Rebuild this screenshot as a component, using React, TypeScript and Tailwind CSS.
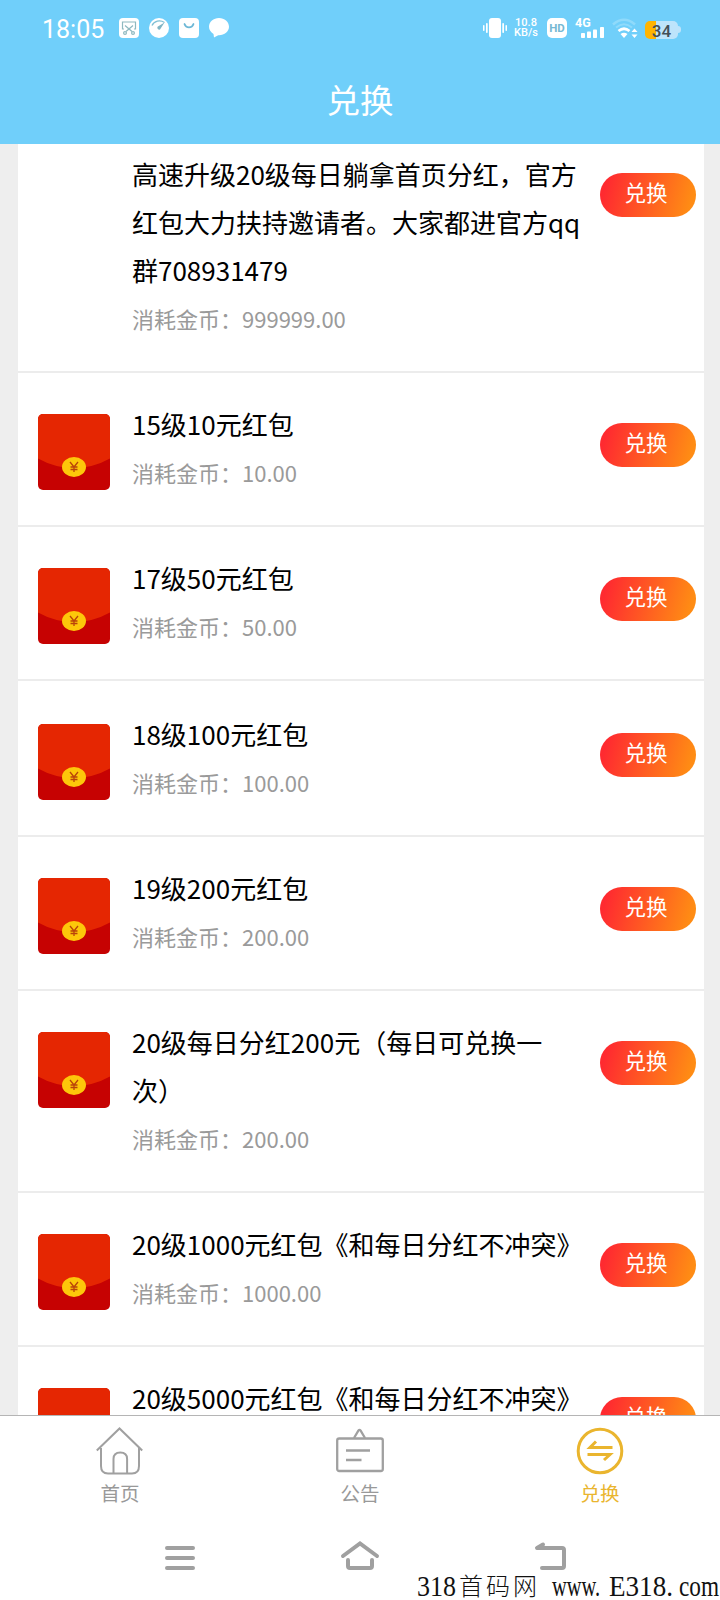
const items: { title: string; cost: string; img: boolean; row?: string }[] = [
  {
    title: "高速升级20级每日躺拿首页分红，官方\n红包大力扶持邀请者。大家都进官方qq\n群708931479",
    cost: "999999.00",
    img: false,
  },
  { title: "15级10元红包", cost: "10.00", img: true },
  { title: "17级50元红包", cost: "50.00", img: true },
  { title: "18级100元红包", cost: "100.00", img: true, row: "pt-[30px]" },
  { title: "19级200元红包", cost: "200.00", img: true },
  { title: "20级每日分红200元（每日可兑换一\n次）", cost: "200.00", img: true },
  { title: "20级1000元红包《和每日分红不冲突》", cost: "1000.00", img: true },
  { title: "20级5000元红包《和每日分红不冲突》", cost: "5000.00", img: true },
];

const StatusBar = () => {
  return (
    <div className="flex h-14 items-center justify-between pl-[42px] pr-[39px]">
      <div className="flex items-center gap-[10px]">
        <span className="mr-[4px] w-[63px] whitespace-nowrap pt-[3px] font-[Roboto,sans-serif] text-[25px] leading-[30px]">
          18:05
        </span>
        <svg width="20" height="20" viewBox="0 0 20 20" fill="none">
          <rect width="20" height="20" rx="4" fill="#fff" />
          <g stroke="#8fb9c0" strokeWidth="1.2">
            <path d="M5 11H3.5V4h13v7H15M6 7.5l7 6M14 7.5l-7 6" />
            <circle cx="6" cy="15" r="1.4" />
            <circle cx="14" cy="15" r="1.4" />
          </g>
        </svg>
        <svg width="20" height="20" viewBox="0 0 20 20" fill="none">
          <circle cx="10" cy="10" r="10" fill="#fff" />
          <path d="M3 7.5C5 3 11 1.5 15.500 4.500" stroke="#7fbfd4" strokeWidth="1.3" />
          <path d="M15.500 4.500L11 11.500A2 2 0 0 1 8.500 8.800z" fill="#7fb4c4" />
        </svg>
        <svg width="20" height="20" viewBox="0 0 20 20" fill="none">
          <rect width="20" height="20" rx="4" fill="#fff" />
          <path d="M5.500 6C7 10.500 13 10.500 14.500 6" stroke="#6db8d6" strokeWidth="1.800" strokeLinecap="round" />
        </svg>
        <svg width="20" height="20" viewBox="0 0 20 20">
          <path
            d="M10 0C4.500 0 0 3.800 0 8.700c0 3 1.800 5.600 4.500 7.200L5 19.500l4.200-2.300H10c5.500 0 10-3.700 10-8.500S15.500 0 10 0z"
            fill="#fff"
          />
        </svg>
      </div>
      <div className="flex items-center">
        <svg width="24" height="20" viewBox="0 0 24 20" fill="#fff">
          <rect x="6" width="12" height="20" rx="3" />
          <rect x="3" y="5" width="1.700" height="10" rx=".8" />
          <rect x="0" y="7" width="1.500" height="6" rx=".7" />
          <rect x="19.300" y="5" width="1.700" height="10" rx=".8" />
          <rect x="22.500" y="7" width="1.500" height="6" rx=".7" />
        </svg>
        <div className="ml-[7px] w-6 whitespace-nowrap text-center font-[Roboto,sans-serif] text-[11px] font-medium leading-[10.5px]">
          10.8
          <br />
          KB/s
        </div>
        <div className="ml-[9px] h-5 w-5 rounded-[5px] bg-white text-center font-[Roboto,sans-serif] text-[11.5px] font-bold leading-5 text-[#76b9d3]">
          HD
        </div>
        <svg className="ml-[7px]" width="32" height="22" viewBox="0 0 32 22" fill="#fff">
          <text x="1" y="10" fontFamily="Roboto, sans-serif" fontSize="12.500" fontWeight="700">
            4G
          </text>
          <rect x="7" y="16" width="4" height="5" rx=".8" />
          <rect x="13" y="14.500" width="4" height="6.500" rx=".8" />
          <rect x="19" y="12.500" width="4" height="8.500" rx=".8" />
          <rect x="26" y="10" width="4" height="11" rx=".8" />
        </svg>
        <svg className="ml-[6px]" width="26" height="22" viewBox="0 0 26 22" fill="none">
          <path d="M1 7.500Q12 -2 23 7.500" stroke="#8fdafb" strokeWidth="2.500" />
          <path d="M4 10.500Q12 4 20 10.500" stroke="#8fdafb" strokeWidth="2" />
          <path d="M6.500 14Q12 9.500 17.500 14" stroke="#fff" strokeWidth="2.700" />
          <path d="M8.500 17Q12 14.500 15.500 17L12 21z" fill="#fff" />
          <path d="M19.500 15l3-3.500 3 3.500zM19.500 17.500l3 3.500 3-3.500z" fill="#fff" />
        </svg>
        <div className="ml-[7px] mt-[3px] h-[18px] w-[33px] rounded-[5px] bg-linear-to-r from-[#ffb400] from-[33%] to-[#bde4fb] to-[33%] text-center font-[Roboto,sans-serif] text-[17px] font-medium leading-[20px] text-[#444f57]">
          34
        </div>
        <div className="mt-[3px] h-[7px] w-[3px] rounded-r bg-[#bde4fb]" />
      </div>
    </div>
  );
};

const RedPacket = () => {
  return (
    <svg className="rounded-[5px]" width="72" height="76" viewBox="0 0 72 76">
      <rect width="72" height="76" fill="#c60202" />
      <path d="M0 0h72v44.500Q55 54 36 54T0 44.500z" fill="#e52602" />
      <ellipse cx="36" cy="53" rx="12" ry="10" fill="#fdc70a" />
      <path d="M32 48l4 5 4-5M36 53v5M32.500 53h7M32.500 55.500h7" stroke="#b9430a" strokeWidth="1.300" fill="none" />
    </svg>
  );
};

const Row = (props: { title: string; cost: string; img: boolean; row?: string }) => {
  return (
    <div className={`flex border-b-2 border-[#ececec] pb-7 pl-5 pr-2 ${props.row ?? "pt-7"}`}>
      <div className="mt-[13px] h-[76px] w-[72px] shrink-0">{props.img && <RedPacket />}</div>
      <div className="-mt-px mb-px ml-[22px] grow">
        <h2 className="whitespace-pre text-[26px] leading-[48px] text-black">{props.title}</h2>
        <p className="text-[22px] leading-[48px] text-[#9a9a9a]">消耗金币：{props.cost}</p>
      </div>
      <button className="mt-[22px] h-11 w-24 shrink-0 rounded-full bg-[linear-gradient(105deg,#ff2a30_8%,#ff8c14_92%)] pb-[7px] pr-1 text-[21.5px] leading-[37px] text-white">
        兑换
      </button>
    </div>
  );
};

const TabBar = () => {
  return (
    <div className="flex h-[93px] border-t border-[#b5b5b5] bg-white pt-[11px] text-[19.5px] leading-[30px] text-[#999]">
      <div className="flex w-60 flex-col items-center gap-[3px]">
        <svg width="48" height="48" viewBox="0 0 48 48" fill="none" stroke="#a0a0a0" strokeWidth="2">
          <path d="M.8 23.500L23.500 1.500l22.700 22" />
          <path d="M5 21v18q0 7.500 7 7.500h24q7 0 7-7.500V21" />
          <path d="M17.500 46.500V32q0-6.500 6.800-6.500t6.800 6.500v14.500" />
        </svg>
        <span>首页</span>
      </div>
      <div className="flex w-60 flex-col items-center gap-[3px]">
        <svg width="48" height="48" viewBox="0 0 48 48" fill="none" stroke="#a0a0a0" strokeWidth="2.300">
          <rect x="1.200" y="11.500" width="45.600" height="32.500" rx="2" />
          <path d="M18 11l4.500-7.500q1-1.300 2 0L29 11M10 23.500h24M10 33h15.500" />
        </svg>
        <span>公告</span>
      </div>
      <div className="flex w-60 flex-col items-center gap-[3px] text-[#eab52e]">
        <svg width="48" height="48" viewBox="0 0 48 48" fill="none" stroke="#eab52e" strokeWidth="3">
          <circle cx="24" cy="24" r="21.800" />
          <path d="M36.500 20.500H14l6-6M11.500 27.500h22.500l-6 5.500" />
        </svg>
        <span>兑换</span>
      </div>
    </div>
  );
};

const SystemNav = () => {
  return (
    <div className="relative h-[92px] bg-white">
      <div className="flex items-start pl-[164px] pt-8">
        <svg width="32" height="32" viewBox="0 0 32 32" stroke="#a0a0a0" strokeWidth="4" strokeLinecap="round">
          <path d="M3 8h26M3 18h26M3 28h26" />
        </svg>
        <svg
          className="ml-[144px]"
          width="40"
          height="32"
          viewBox="0 0 40 32"
          fill="none"
          stroke="#a0a0a0"
          strokeWidth="4"
          strokeLinecap="round"
        >
          <path d="M3 16L20 3.500 37 16M8 20v6q0 2 2 2h20q2 0 2-2v-6" />
        </svg>
        <svg
          className="ml-[152px]"
          width="36"
          height="32"
          viewBox="0 0 36 32"
          fill="none"
          stroke="#a0a0a0"
          strokeWidth="4"
          strokeLinecap="round"
          strokeLinejoin="round"
        >
          <path d="M11 4.500L5 8h25q2 0 2 2v16q0 2-2 2H10" />
        </svg>
      </div>
      <svg
        className="absolute bottom-0 right-0"
        width="306"
        height="32"
        viewBox="0 0 306 32"
        fontFamily="Liberation Serif, Noto Sans CJK SC, serif"
        fontSize="29"
        fill="#111"
      >
        <text x="3" y="28" textLength="39" lengthAdjust="spacingAndGlyphs">318</text>
        <text x="45" y="27" fontSize="24" fontWeight="300" textLength="78" lengthAdjust="spacing">首码网</text>
        <text x="138" y="28" textLength="48" lengthAdjust="spacingAndGlyphs">www.</text>
        <text x="195" y="28" textLength="64" lengthAdjust="spacingAndGlyphs">E318.</text>
        <text x="265" y="28" textLength="40" lengthAdjust="spacingAndGlyphs">com</text>
      </svg>
    </div>
  );
};

export default function App() {
  return (
    <div className="flex h-[1600px] w-[720px] flex-col overflow-hidden bg-[#eee] font-['Noto_Sans_CJK_SC',sans-serif]">
      <header className="h-36 shrink-0 bg-[#70cffa] text-white">
        <StatusBar />
        <h1 className="pt-[19px] text-center text-[33.5px] leading-[48px]">兑换</h1>
      </header>
      <main className="h-[1271px] shrink-0 overflow-hidden pl-[18px] pr-4">
        <div className="-mt-[21px] bg-white">
          {items.map((item) => (
            <Row key={item.title} {...item} />
          ))}
        </div>
      </main>
      <TabBar />
      <SystemNav />
    </div>
  );
}
